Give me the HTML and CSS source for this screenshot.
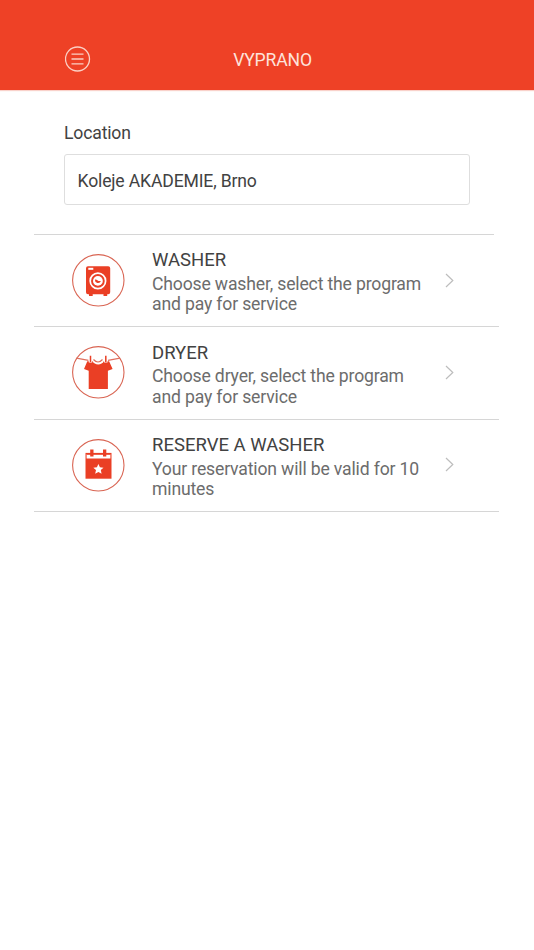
FILE: index.html
```
<!DOCTYPE html>
<html lang="en">
<head>
<meta charset="utf-8">
<title>VYPRANO</title>
<link rel="stylesheet" href="styles.css">
</head>
<body>
  <header class="header">
    <button class="menu-btn" aria-label="Menu">
      <svg width="26" height="26" viewBox="0 0 26 26">
        <circle cx="12.5" cy="13" r="12"/>
        <path d="M6.500 8.200h12M6.500 13h12M6.500 17.800h12"/>
      </svg>
    </button>
    <h1 class="title">VYPRANO</h1>
  </header>

  <section class="location">
    <div class="location-label">Location</div>
    <div class="location-field">Koleje AKADEMIE, Brno</div>
  </section>

  <ul class="services">
    <li class="service">
      <svg class="icon" width="54" height="54" viewBox="0 0 54 54">
        <circle class="ring" cx="27.3" cy="27.3" r="25.7"/>
        <path class="fill" d="M17 13.300h20.200a2 2 0 0 1 2 2v24a2 2 0 0 1-2 2h-1v1.700h-3.700v-1.700h-10.800v1.700h-3.700v-1.700h-1a2 2 0 0 1-2-2v-24a2 2 0 0 1 2-2z"/>
        <rect class="light" x="17.300" y="14.800" width="5" height="2"/>
        <circle class="light-line" cx="26.900" cy="27.900" r="7.700"/>
        <circle class="light" cx="26.900" cy="27.900" r="4.900"/>
        <path class="fill" d="M23.900 26.800c1.800-1.400 2.400 2 6 1.200a3.100 3.100 0 0 1-6-1.200z"/>
      </svg>
      <div class="text">
        <h2>WASHER</h2>
        <p>Choose washer, select the program and pay for service</p>
      </div>
      <svg class="arrow" width="9" height="15" viewBox="0 0 9 15"><path d="M1 1l6.800 6.500L1 14"/></svg>
    </li>
    <li class="service">
      <svg class="icon" width="54" height="54" viewBox="0 0 54 54">
        <circle class="ring" cx="27.3" cy="27.3" r="25.7"/>
        <path class="rope" d="M5.500 13.200l12 2.200M22.500 14.500q4.500 5 9 0M37 15.400l12-2.200"/>
        <path class="fill" d="M16.300 16.300h5.400c1.500 4.200 9.500 4.200 11 0h5.400l3.500 7.700-4.700 1.700v18.300h-19.200v-18.300l-4.700-1.700z"/>
        <path class="gap" d="M19.500 11v6.500M34.800 11v6.500"/>
        <path class="peg" d="M19.500 10.800v6.200M34.800 10.800v6.200"/>
      </svg>
      <div class="text">
        <h2>DRYER</h2>
        <p>Choose dryer, select the program and pay for service</p>
      </div>
      <svg class="arrow" width="9" height="15" viewBox="0 0 9 15"><path d="M1 1l6.800 6.500L1 14"/></svg>
    </li>
    <li class="service">
      <svg class="icon" width="54" height="54" viewBox="0 0 54 54">
        <circle class="ring" cx="27.3" cy="27.3" r="25.7"/>
        <path class="fill" d="M14.500 14.900h26v25.800h-26z"/>
        <path class="light" d="M15.600 16.200h23.800v4.400h-23.800z"/>
        <path class="fill" d="M15.600 15.500h23.800v1.200h-23.800zM19.200 11.500h3.300v7h-3.300zM32 11.500h3.300v7h-3.300z"/>
        <path class="light" d="M27.400 26l1.500 3.300 3.600.4-2.700 2.400.8 3.600-3.200-1.800-3.200 1.800.8-3.600-2.700-2.400 3.600-.4z"/>
      </svg>
      <div class="text">
        <h2>RESERVE A WASHER</h2>
        <p>Your reservation will be valid for 10 minutes</p>
      </div>
      <svg class="arrow" width="9" height="15" viewBox="0 0 9 15"><path d="M1 1l6.800 6.500L1 14"/></svg>
    </li>
  </ul>
</body>
</html>
```
FILE: styles.css
```
*{
  box-sizing:border-box;
  margin:0;
  padding:0;
}
body{
  background:#fff;
  color:#424242;
  font-family:Roboto, sans-serif;
  font-size:17.6px;
  letter-spacing:-.16px;
}
.header{
  display:grid;
  grid-template-columns:26px 1fr;
  align-items:center;
  height:90px;
  padding:28px 80px 0 65px;
  background:#ee4126;
  box-shadow:0 1px 1px #f9d2cb;
}
.menu-btn{
  width:26px;
  height:26px;
  border:0;
  background:none;
}
.menu-btn svg{
  display:block;
  fill:none;
  stroke:#fbcfc4;
  stroke-width:1.3;
}
.title{
  padding-top:2px;
  color:#fde3dc;
  font-size:17.6px;
  font-weight:400;
  text-align:center;
}
.location{
  padding:32px 64px 29px;
}
.location-label{
  height:32px;
  line-height:22px;
}
.location-field{
  height:51px;
  padding:0 12.5px;
  border:1px solid #dedede;
  border-radius:3px;
  line-height:52px;
}
.services{
  list-style:none;
  width:465px;
  margin-left:34px;
}
.services::before{
  content:"";
  display:block;
  width:460px;
  height:1px;
  background:#d6d6d6;
}
.service{
  display:flex;
  height:92.4px;
  padding:15px 0 0 37px;
  border-bottom:1px solid #d6d6d6;
}
.icon{
  flex:none;
  margin-top:3px;
}
.ring{
  fill:none;
  stroke:#d96553;
  stroke-width:1.1;
}
.fill{
  fill:#ea3f25;
}
.light{
  fill:#fff;
}
.light-line{
  fill:none;
  stroke:#fff;
  stroke-width:1.7;
}
.rope{
  fill:none;
  stroke:#e0705f;
  stroke-width:1.2;
}
.gap{
  fill:none;
  stroke:#fff;
  stroke-width:3.4;
}
.peg{
  fill:none;
  stroke:#ea3f25;
  stroke-width:1.5;
}
.text{
  width:280px;
  margin-left:27px;
  padding-top:.2px;
}
.text h2{
  font-size:18.5px;
  font-weight:400;
  letter-spacing:0;
  line-height:20px;
  margin-bottom:3.9px;
}
.text p{
  color:#6c6c6c;
  line-height:20.2px;
}
.arrow{
  flex:none;
  margin:22.5px 0 0 13px;
  fill:none;
  stroke:#bdbdbd;
  stroke-width:1.2;
}
```
